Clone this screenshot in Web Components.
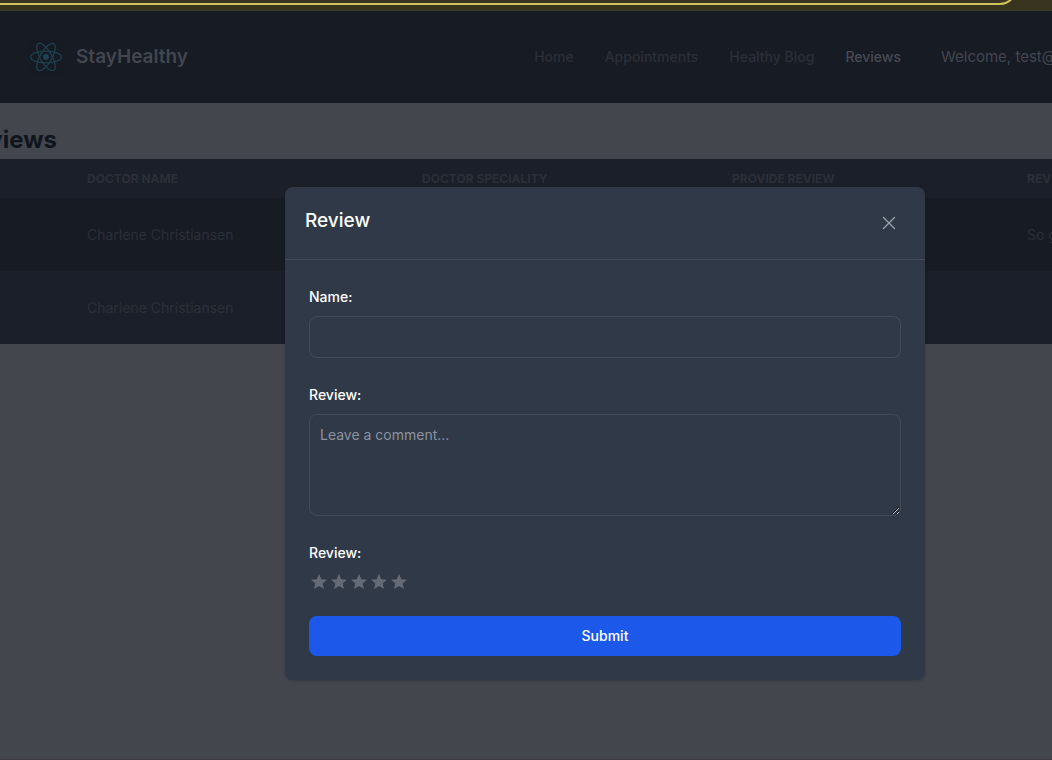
<!DOCTYPE html>
<html lang="en">
<head>
<meta charset="utf-8">
<title>StayHealthy – Reviews</title>
<style>
  html, body { margin: 0; min-height: 100vh; }
  body { font-family: Inter, "Liberation Sans", sans-serif; background: #43464d; overflow: hidden; }
</style>
</head>
<body>
<stay-page>
  <address-strip></address-strip>
  <site-header></site-header>
  <reviews-table></reviews-table>
  <review-modal slot="overlay"></review-modal>
</stay-page>
<script>
const define = (name, html, setup) => customElements.define(name, class extends HTMLElement {
  constructor() {
    super();
    const t = document.createElement('template');
    t.innerHTML = html;
    this.attachShadow({ mode: 'open' }).append(t.content.cloneNode(true));
    if (setup) setup(this.shadowRoot);
  }
});

define('stay-page', `
<style>
  :host { display: block; position: relative; min-height: 100vh; overflow: hidden; box-sizing: border-box; border-bottom: 1px solid #3d3a42; }
  .overlay { position: absolute; inset: 0; display: flex; justify-content: center; align-items: flex-start; padding: 187px 0 0 158px; }
</style>
<slot></slot>
<div class="overlay"><slot name="overlay"></slot></div>`);

define('address-strip', `
<style>
  :host { display: block; height: 11px; box-sizing: border-box; background: #383420; border-bottom: 1px solid #3f3a2c; overflow: hidden; }
  .pill { box-sizing: border-box; height: 40px; margin: -35px 35px 0 -40px; border: 2px solid #d0c25c; border-radius: 17px; background: #3a3424; }
</style>
<div class="pill"></div>`);

define('react-logo', `
<style>:host { display: block; width: 36px; height: 36px; background: #161a22; } svg { display: block; }</style>
<svg width="36" height="36" viewBox="-18 -18 36 36" fill="none" stroke="#1f3f4e" stroke-width="1.3">
  <circle r="2.9" fill="#1f4354" stroke="none"/>
  <ellipse rx="15.4" ry="5.9"/>
  <ellipse rx="15.4" ry="5.9" transform="rotate(60)"/>
  <ellipse rx="15.4" ry="5.9" transform="rotate(120)"/>
</svg>`);

define('site-header', `
<style>
  :host { display: flex; align-items: center; height: 92px; background: #171b24; padding-left: 28px; white-space: nowrap; }
  .brand { display: flex; align-items: center; gap: 12px; color: #43464f; font-size: 19px; line-height: 28px; font-weight: 600; text-decoration: none; }
  nav { display: flex; gap: 31px; margin-left: auto; font-size: 14px; line-height: 20px; font-weight: 500; }
  nav a { color: #2b2f38; text-decoration: none; }
  nav a[aria-current] { color: #474a53; }
  .welcome { width: 111px; margin-left: 40px; font-size: 15px; line-height: 24px; color: #43464f; }
</style>
<a class="brand" href="#"><react-logo></react-logo><span>StayHealthy</span></a>
<nav>
  <a href="#home">Home</a><a href="#appointments">Appointments</a><a href="#blog">Healthy Blog</a><a href="#reviews" aria-current="page">Reviews</a>
</nav>
<span class="welcome">Welcome, test@</span>`);

define('reviews-table', `
<style>
  :host { display: block; overflow: hidden; }
  h1 { margin: 0 0 0 -41px; padding: 21px 0 3px; font-size: 24px; line-height: 32px; font-weight: 700; color: #10141d; }
  table { width: 100%; table-layout: fixed; border-collapse: collapse; text-align: left; white-space: nowrap; background: #1b1f29; color: #2b2f38; font-size: 14px; line-height: 20px; }
  .name { width: 398px; } .spec { width: 310px; } .give { width: 295px; }
  th, td { padding: 0 0 0 24px; box-sizing: border-box; }
  th:first-child, td:first-child { padding-left: 87px; }
  th { height: 39px; font-size: 12px; line-height: 16px; font-weight: 700; text-transform: uppercase; }
  td { height: 73px; }
  tbody tr:first-child { background: #171b24; }
</style>
<h1>Reviews</h1>
<table>
  <colgroup><col class="name"><col class="spec"><col class="give"><col></colgroup>
  <thead><tr><th>Doctor Name</th><th>Doctor Speciality</th><th>Provide Review</th><th>Rev</th></tr></thead>
  <tbody>
    <tr><td>Charlene Christiansen</td><td></td><td></td><td>So g</td></tr>
    <tr><td>Charlene Christiansen</td><td></td><td></td><td></td></tr>
  </tbody>
</table>`);

define('star-rating', `
<style>
  :host { display: flex; }
  button { width: 20px; height: 20px; padding: 0; border: 0; background: none; color: #646b77; cursor: pointer; }
  svg { display: block; width: 20px; height: 20px; }
</style>`, root => {
  for (let n = 1; n <= 5; n++) {
    root.innerHTML += `<button type="button" aria-label="${n}"><svg viewBox="-0.5 -0.3 25 25" fill="currentColor"><path d="M12 17.27 18.18 21l-1.64-7.03L22 9.24l-7.19-.61L12 2 9.19 8.63 2 9.24l5.46 4.73L5.82 21z"/></svg></button>`;
  }
});

define('review-modal', `
<style>
  :host { display: block; width: 100%; max-width: 640px; background: #303947; border-radius: 8px; box-shadow: 0 1px 3px rgba(0,0,0,.2); color: #fff; }
  header { display: flex; justify-content: space-between; align-items: flex-start; padding: 20px; border-bottom: 1px solid #434b59; }
  h2 { margin: 0; font-size: 19px; line-height: 28px; font-weight: 500; }
  .close { width: 32px; height: 32px; padding: 0; border: 0; background: none; color: #9ca3af; display: grid; place-items: center; }
  form { display: grid; padding: 27px 24px 24px; font-size: 14px; line-height: 20px; }
  label, .label { font-weight: 500; margin-bottom: 9px; }
  input, textarea { display: block; box-sizing: border-box; width: 100%; margin: 0 0 27px; padding: 10px; font: inherit; color: #fff; background: transparent; border: 1px solid #434b59; border-radius: 8px; outline: 0; }
  input { height: 42px; }
  textarea { height: 102px; resize: vertical; }
  ::placeholder { color: #8b929e; opacity: 1; }
  star-rating { margin-bottom: 24px; }
  .submit { height: 40px; border: 0; border-radius: 8px; background: #1c58ea; color: #fff; font: inherit; font-weight: 500; }
</style>
<header>
  <h2>Review</h2>
  <button class="close" type="button" aria-label="Close"><svg width="14" height="14" viewBox="0 0 14 14" fill="none" stroke="currentColor" stroke-width="1.3" stroke-linecap="round"><path d="M1.5 1.5l11 11M12.5 1.5l-11 11"/></svg></button>
</header>
<form>
  <label for="name">Name:</label>
  <input id="name" type="text">
  <label for="comment">Review:</label>
  <textarea id="comment" placeholder="Leave a comment..."></textarea>
  <span class="label">Review:</span>
  <star-rating></star-rating>
  <button class="submit" type="button">Submit</button>
</form>`);
</script>
</body>
</html>
